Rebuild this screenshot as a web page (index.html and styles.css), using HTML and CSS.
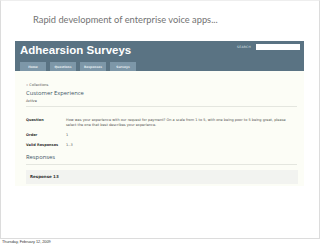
FILE: index.html
```html
<!DOCTYPE html>
<html lang="en">
<head>
  <meta charset="UTF-8" />
  <title>Adhearsion Surveys</title>
  <link rel="stylesheet" href="styles.css">
</head>
<body>

  <div class="slide">
    <h1 class="slide-title">Rapid development of enterprise voice apps...</h1>

    <div class="app">
      <!-- Header -->
      <div class="header">
        <div class="header-top">
          <div class="logo">Adhearsion Surveys</div>
          <div class="search">
            <span class="search-label">SEARCH</span>
            <span class="search-box"></span>
          </div>
        </div>
        <div class="tabs">
          <span class="tab">Home</span>
          <span class="tab">Questions</span>
          <span class="tab">Responses</span>
          <span class="tab">Surveys</span>
        </div>
      </div>

      <!-- Survey detail -->
      <div class="content">
        <div class="crumb">« Collections</div>
        <div class="survey-name">Customer Experience</div>
        <div class="status">Active</div>

        <div class="details">
          <div class="row">
            <div class="label">Question</div>
            <div class="value">How was your experience with our request for payment? On a scale from 1 to 5, with one being poor to 5 being great, please select the one that best describes your experience.</div>
          </div>
          <div class="row">
            <div class="label">Order</div>
            <div class="value">1</div>
          </div>
          <div class="row">
            <div class="label">Valid Responses</div>
            <div class="value">1..3</div>
          </div>
        </div>

        <div class="section-title">Responses</div>
        <div class="response">Response 13</div>
      </div>
    </div>
  </div>

  <div class="caption">Thursday, February 12, 2009</div>

</body>
</html>
```

FILE: styles.css
```css
* {
  box-sizing: border-box;
  margin: 0;
  padding: 0;
}

body {
  width: 320px;
  height: 246px;
  background: #fff;
  font-family: 'DejaVu Sans', sans-serif;
  overflow: hidden;
}

.slide {
  height: 239px;
  border: 1px solid #dcdcdc;
  border-top-color: #eee;
  padding-top: 13px;
}

.slide-title {
  font-family: 'Lato', sans-serif;
  font-weight: normal;
  font-size: 9.3px;
  line-height: 12px;
  color: #737373;
  margin-left: 32px;
  height: 27px;
}

.app {
  margin-left: 14px;
  width: 289px;
}

.header {
  background: #5a7383;
  height: 30px;
  padding: 0 4px 0 5px;
  display: flex;
  flex-direction: column;
}

.header-top {
  display: flex;
  justify-content: space-between;
  align-items: flex-start;
  height: 21px;
}

.logo {
  font-family: 'Liberation Sans', sans-serif;
  font-weight: bold;
  font-size: 11.5px;
  line-height: 16px;
  color: #fff;
  padding-top: 1px;
}

.search {
  display: flex;
  align-items: center;
  gap: 5px;
  padding-top: 3px;
}

.search-label {
  font-size: 3px;
  color: #dfe6ea;
  letter-spacing: 0.3px;
}

.search-box {
  width: 44px;
  height: 6px;
  background: #fff;
}

.tabs {
  display: flex;
  gap: 4px;
  height: 9px;
}

.tab {
  background: #7d97a8;
  color: #e6edf1;
  font-size: 3px;
  font-weight: bold;
  width: 26px;
  display: flex;
  align-items: center;
  justify-content: center;
}

.content {
  background: #fcfdf6;
  padding: 11px 7px 2px 11px;
  color: #333;
}

.crumb {
  font-size: 3.5px;
  line-height: 6px;
  color: #555;
}

.survey-name {
  font-family: 'Open Sans', sans-serif;
  font-size: 5.8px;
  line-height: 10px;
  color: #3d5565;
}

.status {
  font-size: 3.5px;
  line-height: 6px;
  color: #444;
}

.details {
  border-top: 1px solid #e4e6df;
  margin-top: 2px;
  padding-top: 11px;
}

.row {
  display: flex;
  margin-bottom: 5px;
}

.label {
  width: 40px;
  font-size: 3.5px;
  line-height: 5px;
  font-weight: bold;
  color: #333;
}

.value {
  flex: 1;
  font-size: 3.5px;
  line-height: 5px;
  color: #555;
  padding-right: 2px;
}

.section-title {
  font-family: 'Open Sans', sans-serif;
  font-size: 5.8px;
  line-height: 9px;
  color: #3d5565;
  margin-top: 5px;
  padding-bottom: 2px;
  border-bottom: 1px solid #e4e6df;
}

.response {
  background: #f2f3f0;
  margin-top: 5px;
  height: 14px;
  padding-left: 4px;
  font-size: 4px;
  font-weight: bold;
  line-height: 14px;
  color: #333;
  margin-right: -1px;
}

.caption {
  font-family: 'Liberation Sans', sans-serif;
  font-size: 3.8px;
  line-height: 7px;
  color: #333;
  padding-left: 2px;
}
```
